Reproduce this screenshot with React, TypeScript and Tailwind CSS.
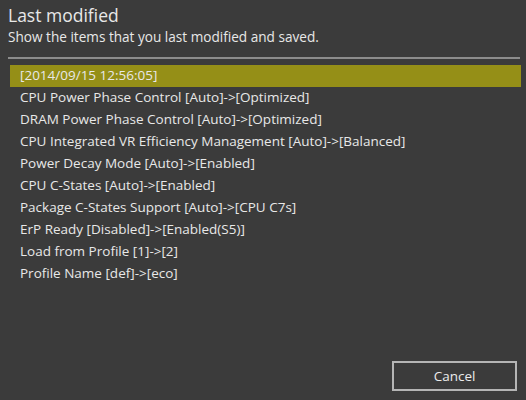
const items = [
  "CPU Power Phase Control [Auto]->[Optimized]",
  "DRAM Power Phase Control [Auto]->[Optimized]",
  "CPU Integrated VR Efficiency Management [Auto]->[Balanced]",
  "Power Decay Mode [Auto]->[Enabled]",
  "CPU C-States [Auto]->[Enabled]",
  "Package C-States Support [Auto]->[CPU C7s]",
  "ErP Ready [Disabled]->[Enabled(S5)]",
  "Load from Profile [1]->[2]",
  "Profile Name [def]->[eco]",
];

export default function App() {
  return (
    <main className="w-[526px] h-[400px] bg-[#3b3b3b] text-[#e8e8e8] font-['Open_Sans',sans-serif] flex flex-col px-2 pt-[2px] overflow-hidden">
      <h1 className="text-[17.5px] leading-[26px]">Last modified</h1>
      <p className="text-[13.6px] leading-[20px] mt-[-1px]">Show the items that you last modified and saved.</p>
      <div className="h-[2px] bg-[#8c8c8c] mt-[10px] mr-[-2px]" />
      <section className="flex flex-col mt-[6px] ml-[2px] mr-[-3px]">
        <div className="h-[22px] bg-[#958f17] pl-[10px] text-[13.5px] leading-[20px]">[2014/09/15 12:56:05]</div>
        {items.map((item) => (
          <div key={item} className="h-[22px] pl-[10px] text-[13.5px] leading-[20px]">
            {item}
          </div>
        ))}
      </section>
      <div className="flex-1" />
      <div className="flex justify-end mb-[9px] mr-[1px]">
        <button className="w-[125px] h-[30px] border-2 border-[#b5b5b5] text-[13.5px] text-[#ececec]">Cancel</button>
      </div>
    </main>
  );
}
